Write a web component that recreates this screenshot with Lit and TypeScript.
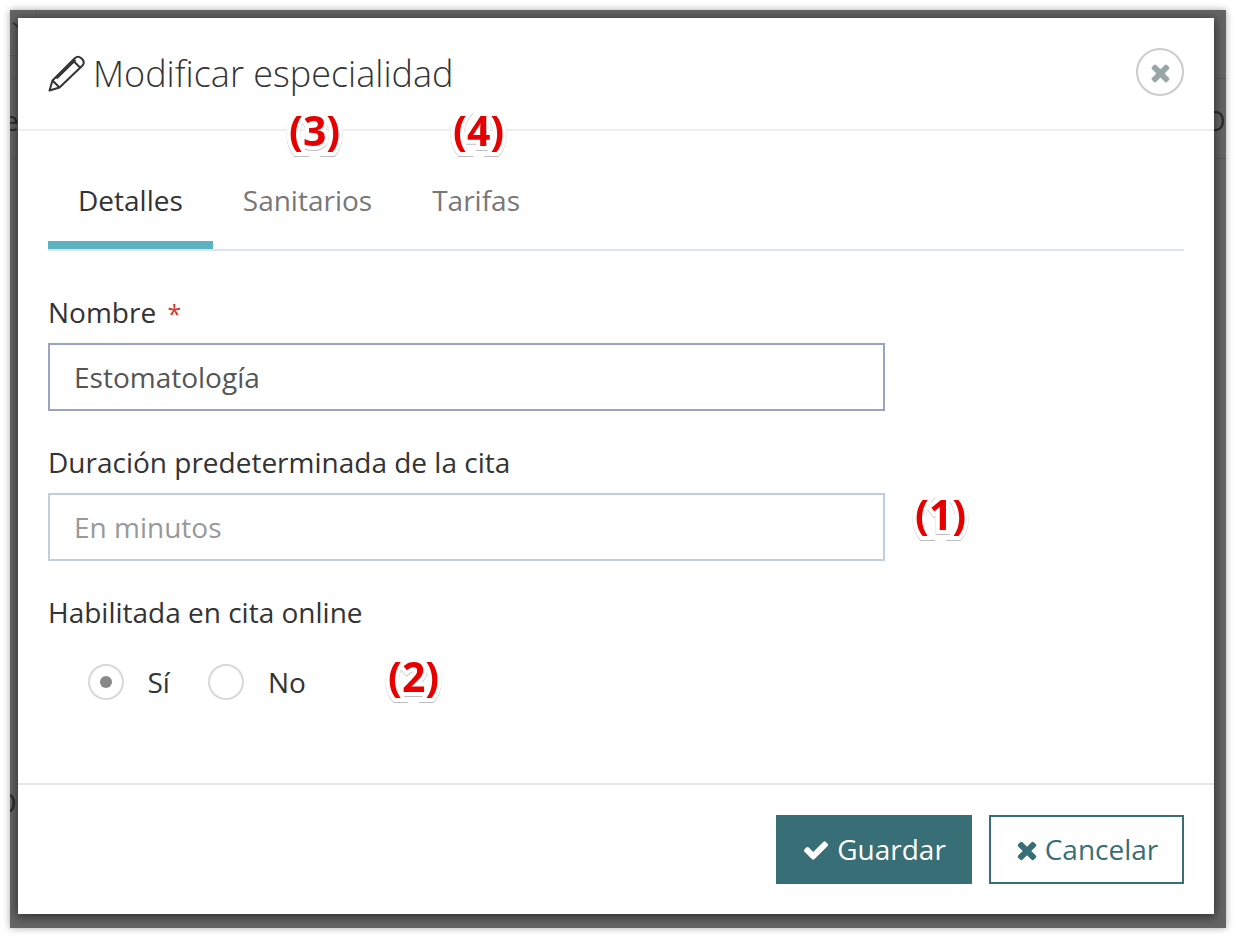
import { css, html, LitElement } from "lit";
import { customElement } from "lit/decorators.js";

const CHECK =
  "M1671 566q0 40-28 68l-724 724-136 136q-28 28-68 28t-68-28l-136-136-362-362q-28-28-28-68t28-68l136-136q28-28 68-28t68 28l294 295 656-657q28-28 68-28t68 28l136 136q28 28 28 68z";
const TIMES =
  "M1490 1322q0 40-28 68l-136 136q-28 28-68 28t-68-28l-294-294-294 294q-28 28-68 28t-68-28l-136-136q-28-28-28-68t28-68l294-294-294-294q-28-28-28-68t28-68l136-136q28-28 68-28t68 28l294 294 294-294q28-28 68-28t68 28l136 136q28 28 28 68t-28 68l-294 294 294 294q28 28 28 68z";

@customElement("app-root")
export class AppRoot extends LitElement {
  static styles = css`
    :host {
      display: block;
      height: 942px;
      background: #fff;
      font-family: "Open Sans", "Liberation Sans", sans-serif;
      color: #333;
    }

    .frame {
      position: relative;
      box-sizing: border-box;
      width: 1216px;
      height: 918px;
      margin: 0 0 0 10px;
      top: 10px;
      padding: 8px 12px 14px 8px;
      background-color: #656565;
      background-image:
        linear-gradient(#5a5a5a, #5a5a5a), linear-gradient(#5a5a5a, #5a5a5a),
        linear-gradient(#5a5a5a, #5a5a5a), linear-gradient(#5a5a5a, #5a5a5a);
      background-size:
        8px 1px,
        100% 1px,
        100% 1px,
        1px 8px;
      background-position:
        0 45px,
        0 68px,
        0 148px,
        26px 0;
      background-repeat: no-repeat;
      box-shadow: 0 0 7px rgba(0, 0, 0, 0.35);
      overflow: hidden;
    }

    .ghost {
      position: absolute;
      font-size: 28px;
      line-height: 1;
      color: #2c2c2c;
      filter: blur(0.4px);
    }

    .tick {
      position: absolute;
      left: 2px;
      top: 15px;
      width: 10px;
      height: 2px;
      background: #3c3c3c;
      transform: rotate(40deg);
    }

    .modal {
      position: relative;
      display: flex;
      flex-direction: column;
      height: 896px;
      background: #fff;
      box-shadow: 0 2px 10px 1px rgba(0, 0, 0, 0.55);
    }

    .head {
      display: flex;
      justify-content: space-between;
      align-items: center;
      box-sizing: border-box;
      height: 113px;
      padding: 0 30px 0 30px;
      border-bottom: 2px solid #eeeeee;
    }

    .title {
      display: flex;
      align-items: center;
      gap: 8px;
      margin: 0;
      font-size: 36px;
      font-weight: 300;
      color: #333;
    }

    .title svg {
      width: 37px;
      height: 38px;
      flex: none;
      margin-top: -2px;
    }

    .close {
      box-sizing: border-box;
      width: 48px;
      height: 48px;
      padding: 0;
      display: flex;
      align-items: center;
      justify-content: center;
      border: 2px solid #cccccc;
      border-radius: 50%;
      background: #fff;
      margin-top: -3px;
    }

    .close svg {
      width: 27px;
      height: 27px;
      fill: #98a6a6;
    }

    .body {
      flex: 1;
      padding: 0 30px;
    }

    .tabs {
      display: flex;
      height: 120px;
      box-sizing: border-box;
      border-bottom: 2px solid #dde3ea;
    }

    .tab {
      display: flex;
      align-items: flex-end;
      box-sizing: content-box;
      padding: 0 30px 30px;
      font-size: 28px;
      line-height: 38px;
      color: #777;
    }

    .tab.active {
      color: #333;
      border-bottom: 8px solid #5bb3c1;
      padding-bottom: 22px;
    }

    .field {
      display: flex;
      flex-direction: column;
    }

    .field label,
    .group-label {
      font-size: 28px;
      line-height: 36px;
      color: #333;
      margin-bottom: 13px;
    }

    .req {
      font-size: 25px;
      line-height: 0;
      color: #d9362b;
      margin-left: 4px;
    }

    input {
      box-sizing: border-box;
      width: 837px;
      height: 68px;
      padding: 0 24px;
      border: 2px solid #c3cedd;
      border-radius: 0;
      outline: none;
      font: inherit;
      font-size: 28px;
      color: #555;
      background: #fff;
    }

    input.focus {
      border-color: #9aa3c2;
    }

    input::placeholder {
      color: #999;
      opacity: 1;
    }

    .first {
      margin-top: 43px;
    }

    .next {
      margin-top: 33px;
    }

    .radios {
      display: flex;
      align-items: center;
      padding: 0 0 0 40px;
      margin-top: 34px;
      font-size: 28px;
      line-height: 36px;
    }

    .radio {
      box-sizing: border-box;
      width: 36px;
      height: 36px;
      display: flex;
      align-items: center;
      justify-content: center;
      border: 2px solid #d8d8d8;
      border-radius: 50%;
      margin-right: 23.5px;
    }

    .radio.on::after {
      content: "";
      width: 12px;
      height: 12px;
      border-radius: 50%;
      background: #888;
    }

    .opt {
      margin-right: 38.5px;
    }

    .foot {
      display: flex;
      justify-content: flex-end;
      gap: 17px;
      box-sizing: border-box;
      height: 131px;
      padding: 30px 30px 0;
      border-top: 2px solid #e5e5e5;
    }

    .btn {
      display: flex;
      align-items: center;
      justify-content: center;
      gap: 7px;
      box-sizing: border-box;
      height: 69px;
      padding: 0 0 2px;
      border: 2px solid #386e75;
      border-radius: 0;
      font: inherit;
      font-size: 28px;
    }

    .btn svg {
      width: 28px;
      height: 28px;
      fill: currentColor;
      margin-top: 2px;
    }

    .save {
      width: 196px;
      background: #386e75;
      color: #fff;
    }

    .cancel {
      width: 195px;
      gap: 4px;
      padding-right: 2px;
      background: #fff;
      color: #386e75;
    }

    /* callout numbers painted on top of the screenshot */
    .mark {
      position: absolute;
      font-size: 41px;
      line-height: 48px;
      font-weight: 700;
      color: #e60000;
      -webkit-text-stroke: 8px #fff;
      paint-order: stroke fill;
      filter: drop-shadow(0 1px 0 #bdbdbd);
      clip-path: inset(5px -10px -10px -10px);
    }
  `;

  render() {
    return html`
      <div class="frame">
        <span class="tick"></span>
        <span class="ghost" style="left:-7px;top:96px">e</span>
        <span class="ghost" style="left:1194px;top:96px">Ou</span>
        <span class="ghost" style="left:-15px;top:778px">O</span>
        <div class="modal">
          <div class="head">
            <h1 class="title">
              <svg viewBox="0 0 37 38" fill="none" stroke="#333" stroke-width="2" stroke-linejoin="round">
                <path d="M1.5 36.5 4.5 26.5 27 4Q30 1.5 33 4L34.5 5.5Q37 8.5 34.5 11.5L11.5 33.5Z" />
                <path d="M4.5 26.5 11.5 33.5M8.5 24.5 27.5 6M24.5 6 32.5 14" />
              </svg>
              Modificar especialidad
            </h1>
            <button class="close" aria-label="Cerrar">
              <svg viewBox="0 0 1792 1792"><path d=${TIMES} /></svg>
            </button>
          </div>
          <div class="body">
            <div class="tabs">
              <div class="tab active">Detalles</div>
              <div class="tab">Sanitarios</div>
              <div class="tab">Tarifas</div>
            </div>
            <div class="field first">
              <label>Nombre <span class="req">*</span></label>
              <input class="focus" value="Estomatología" />
            </div>
            <div class="field next">
              <label>Duración predeterminada de la cita</label>
              <input placeholder="En minutos" />
            </div>
            <div class="next group-label">Habilitada en cita online</div>
            <div class="radios">
              <span class="radio on"></span><span class="opt">Sí</span>
              <span class="radio"></span><span class="opt">No</span>
            </div>
          </div>
          <div class="foot">
            <button class="btn save">
              <svg viewBox="0 0 1792 1792"><path d=${CHECK} /></svg>Guardar
            </button>
            <button class="btn cancel">
              <svg viewBox="0 0 1792 1792"><path d=${TIMES} /></svg>Cancelar
            </button>
          </div>
          <span class="mark" style="left:271px;top:88px">(3)</span>
          <span class="mark" style="left:435px;top:88px">(4)</span>
          <span class="mark" style="left:897px;top:472px">(1)</span>
          <span class="mark" style="left:370px;top:634px">(2)</span>
        </div>
      </div>
    `;
  }
}
